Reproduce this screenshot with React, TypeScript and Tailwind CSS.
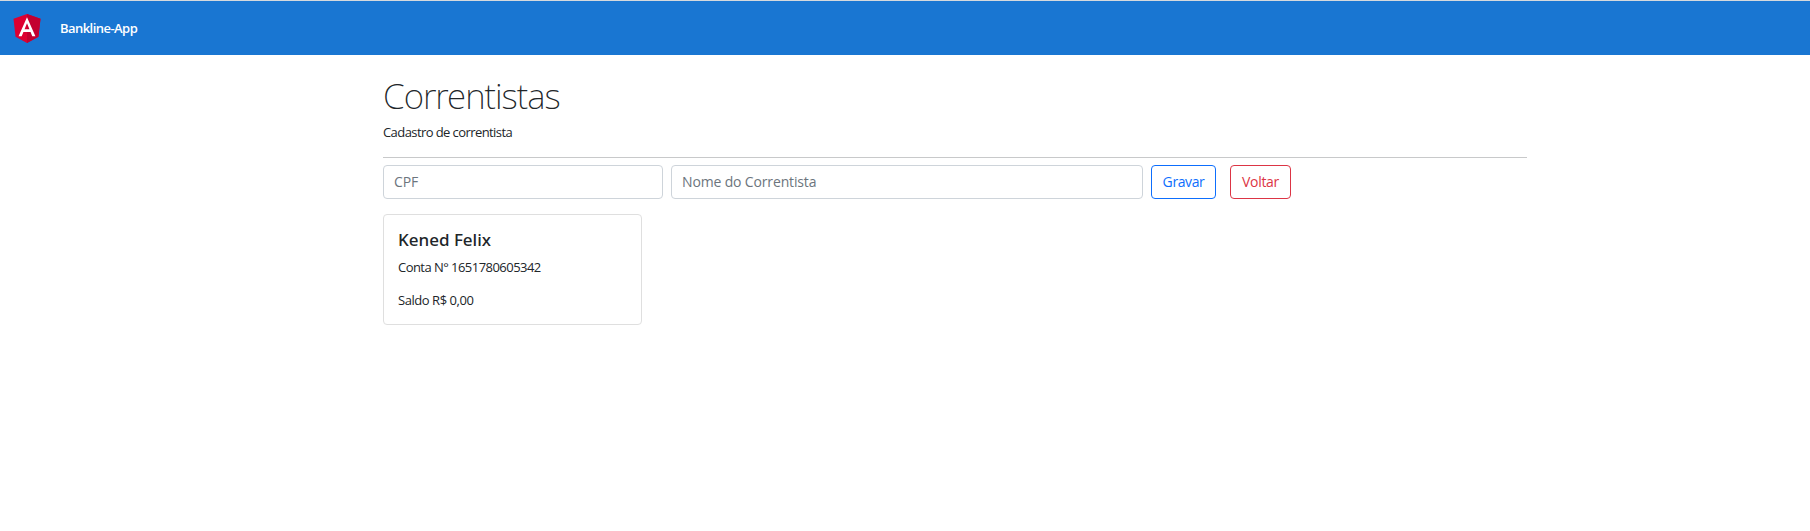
function AngularLogo() {
  return (
    <svg viewBox="31.9 30 186.2 200" className="mt-px ml-[13px] h-[29px] w-[28px]" aria-hidden="true">
      <path fill="#DD0031" d="M125 30 31.900 63.200 46.100 186.300 125 230 203.900 186.300 218.100 63.200z" />
      <path fill="#C3002F" d="M125 30V230L203.900 186.300 218.100 63.200z" />
      <path
        fill="#FFF"
        d="M125 52.100 66.800 182.600H88.500L100.200 153.400H149.600L161.300 182.600H183L125 52.100zM142 135.400H108L125 94.500z"
      />
    </svg>
  );
}

export default function App() {
  return (
    <div className="h-[531px] w-full overflow-hidden bg-white font-['Open_Sans','Noto_Sans',sans-serif] text-[#212529]">
      <header className="flex h-[55px] items-center border-t border-[#d5d9dd] bg-[#1976d2]">
        <AngularLogo />
        <span className="ml-[19px] text-[13px] leading-5 font-semibold tracking-[-0.55px] text-white">Bankline-App</span>
      </header>

      <main className="ml-[383px] w-[1144px] pt-5">
        <h1 className="font-['Noto_Sans','Open_Sans',sans-serif] text-[35px] leading-[42px] font-extralight tracking-[-1px]">Correntistas</h1>
        <p className="mt-[5px] text-[13px] leading-5 tracking-[-0.58px]">Cadastro de correntista</p>
        <hr className="mt-[15px] h-px border-0 bg-[#c8c9ca]" />

        <form className="mt-[7px] flex text-[14px]" onSubmit={(e) => e.preventDefault()}>
          <input
            placeholder="CPF"
            className="h-[34px] w-[280px] rounded-[4px] border border-[#ced4da] px-[10px] pb-px tracking-[-0.15px] placeholder:text-[#6c757d]"
          />
          <input
            placeholder="Nome do Correntista"
            className="ml-2 h-[34px] w-[472px] rounded-[4px] border border-[#ced4da] px-[10px] pb-px tracking-[-0.15px] placeholder:text-[#6c757d]"
          />
          <button className="ml-2 h-[34px] w-[65px] rounded-[4px] border border-[#0d6efd] pb-px tracking-[-0.4px] text-[#0d6efd]">Gravar</button>
          <button className="ml-[14px] h-[34px] w-[61px] rounded-[4px] border border-[#dc3545] pb-px tracking-[-0.3px] text-[#dc3545]">Voltar</button>
        </form>

        <section className="mt-[15px] h-[111px] w-[259px] rounded-[4px] border border-[#dfdfdf] px-[14px] pt-[14px]">
          <h2 className="font-['Noto_Sans','Open_Sans',sans-serif] text-[17px] leading-[22px] font-medium">Kened Felix</h2>
          <p className="mt-[6px] text-[13px] leading-5 tracking-[-0.54px]">Conta N° 1651780605342</p>
          <p className="mt-[13px] text-[13px] leading-5 tracking-[-0.45px]">Saldo R$ 0,00</p>
        </section>
      </main>
    </div>
  );
}
